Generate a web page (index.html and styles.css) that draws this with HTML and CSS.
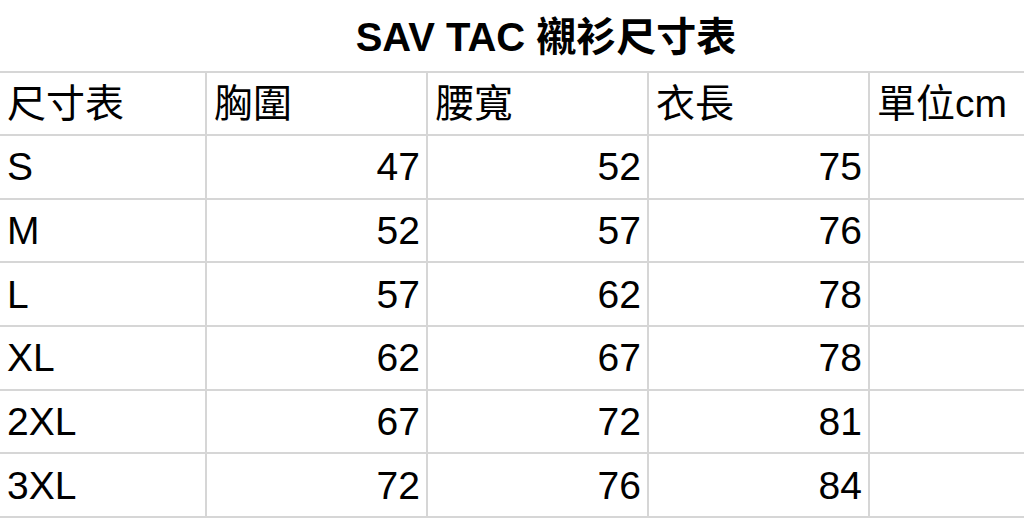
FILE: index.html
```html
<!DOCTYPE html>
<html lang="zh-Hant">
<head>
<meta charset="utf-8">
<title>SAV TAC 襯衫尺寸表</title>
<link rel="stylesheet" href="styles.css">
</head>
<body>
<div class="sheet">
  <div class="title">SAV TAC 襯衫尺寸表</div>
  <div class="grid">
    <div class="cell head">尺寸表</div>
    <div class="cell head">胸圍</div>
    <div class="cell head">腰寬</div>
    <div class="cell head">衣長</div>
    <div class="cell head">單位cm</div>

    <div class="cell label">S</div>
    <div class="cell num">47</div>
    <div class="cell num">52</div>
    <div class="cell num">75</div>
    <div class="cell"></div>

    <div class="cell label">M</div>
    <div class="cell num">52</div>
    <div class="cell num">57</div>
    <div class="cell num">76</div>
    <div class="cell"></div>

    <div class="cell label">L</div>
    <div class="cell num">57</div>
    <div class="cell num">62</div>
    <div class="cell num">78</div>
    <div class="cell"></div>

    <div class="cell label">XL</div>
    <div class="cell num">62</div>
    <div class="cell num">67</div>
    <div class="cell num">78</div>
    <div class="cell"></div>

    <div class="cell label">2XL</div>
    <div class="cell num">67</div>
    <div class="cell num">72</div>
    <div class="cell num">81</div>
    <div class="cell"></div>

    <div class="cell label">3XL</div>
    <div class="cell num">72</div>
    <div class="cell num">76</div>
    <div class="cell num">84</div>
    <div class="cell"></div>
  </div>
</div>
</body>
</html>
```
FILE: styles.css
```css
html, body {
  margin: 0;
  padding: 0;
  background: #ffffff;
}
body {
  width: 1024px;
  height: 520px;
  overflow: hidden;
  font-family: "Liberation Sans", "Noto Sans CJK TC", sans-serif;
  color: #000000;
}
.sheet {
  width: 1024px;
}
.title {
  box-sizing: border-box;
  height: 71px;
  padding-top: 3px;
  padding-left: 68px;
  line-height: 68px;
  text-align: center;
  font-size: 40px;
  font-weight: bold;
  white-space: nowrap;
}
.grid {
  display: grid;
  grid-template-columns: 205px 219px 219px 219px 154px;
  grid-template-rows: 61px repeat(6, 61.7px);
  gap: 2px;
  padding: 2px 0 2px 0;
  background: #d6d6d6;
}
.cell {
  background: #ffffff;
  display: flex;
  align-items: center;
  font-size: 39px;
  line-height: 1;
  white-space: nowrap;
  overflow: hidden;
}
.head, .label {
  padding-left: 7px;
}
.num {
  justify-content: flex-end;
  padding-right: 6px;
}
```
